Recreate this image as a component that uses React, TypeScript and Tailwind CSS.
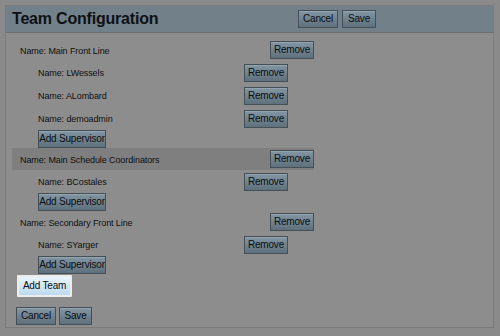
import type { ReactNode } from "react";

type Team = {
  name: string;
  supervisors: string[];
  hover?: boolean;
};

const TEAMS: Team[] = [
  { name: "Main Front Line", supervisors: ["LWessels", "ALombard", "demoadmin"] },
  { name: "Main Schedule Coordinators", supervisors: ["BCostales"], hover: true },
  { name: "Secondary Front Line", supervisors: ["SYarger"] },
];

function Btn({ children, w }: { children: ReactNode; w: string }) {
  return (
    <button
      className={`${w} h-[18px] shrink-0 whitespace-nowrap border border-[#454f57] bg-gradient-to-b from-[#8396a3] to-[#5e707c] p-0 text-[10px] leading-none tracking-[-0.2px] text-[#0a0d10] shadow-[inset_0_1px_0_rgba(255,255,255,0.15)]`}
    >
      {children}
    </button>
  );
}

export default function App() {
  return (
    <div className="h-[336px] w-[500px] bg-[#8a8a8a] p-[5px] pr-[6px] pb-[8px] font-['Liberation_Sans',Arial,sans-serif] text-[#0f0f0f]">
      <div className="flex h-full flex-col border border-[#7b7b7b] bg-[#8d8d8d]">
        {/* HEADER */}
        <div className="flex h-[27px] shrink-0 items-center border-b border-[#6f6f6f] bg-[#72808a] pl-[6px] pr-[117px]">
          <h1 className="text-[16px] font-bold tracking-[-0.2px] text-[#0e1114]">Team Configuration</h1>
          <div className="ml-auto flex gap-[4px]">
            <Btn w="w-[40px]">Cancel</Btn>
            <Btn w="w-[34px]">Save</Btn>
          </div>
        </div>

        {/* TEAMS */}
        <div className="flex flex-col pl-[6px] pt-[6px]">
          {TEAMS.map((team) => (
            <div key={team.name} className="flex flex-col">
              <div
                className={`flex h-[22px] w-[302px] items-center pl-[8px] ${
                  team.hover ? "bg-[#7f7f7f]" : ""
                }`}
              >
                <span className="pt-[2px] text-[9px] leading-none tracking-[-0.1px]">Name: {team.name}</span>
                <div className="ml-auto flex">
                  <Btn w="w-[44px]">Remove</Btn>
                </div>
              </div>
              {team.supervisors.map((s) => (
                <div key={s} className="flex h-[23px] w-[276px] items-center pl-[26px]">
                  <span className="pt-[2px] text-[9px] leading-none tracking-[-0.1px]">Name: {s}</span>
                  <div className="ml-auto flex">
                    <Btn w="w-[44px]">Remove</Btn>
                  </div>
                </div>
              ))}
              <div className="flex h-[18px] items-center pl-[26px]">
                <Btn w="w-[68px]">Add Supervisor</Btn>
              </div>
            </div>
          ))}

          <button className="ml-[5px] mt-[1px] h-[22px] w-[55px] whitespace-nowrap rounded-[1px] border-2 border-[#ececec] bg-gradient-to-b from-[#eaf5fe] to-[#bcdaf0] p-0 text-[10px] leading-none tracking-[-0.2px] text-[#0a0d10]">
            Add Team
          </button>

          <div className="ml-[4px] mt-[10px] flex gap-[3px]">
            <Btn w="w-[40px]">Cancel</Btn>
            <Btn w="w-[33px]">Save</Btn>
          </div>
        </div>
      </div>
    </div>
  );
}
